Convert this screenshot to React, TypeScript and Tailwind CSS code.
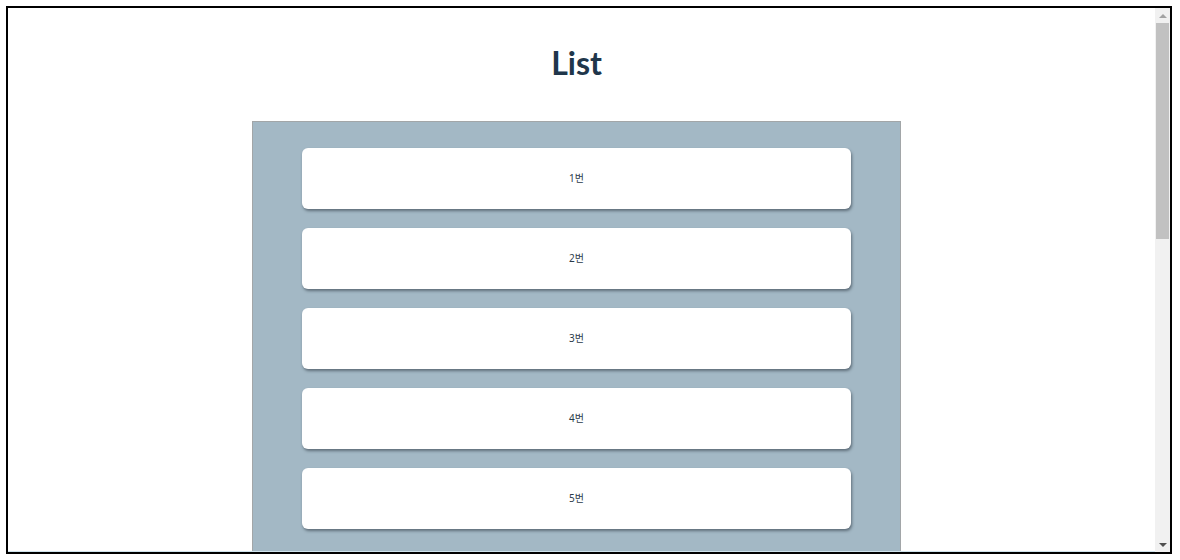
const items = ["1번", "2번", "3번", "4번", "5번"];

function App() {
  return (
    <div className="h-[560px] w-[1180px] overflow-hidden bg-white pl-[6px] pt-[6px]">
      <div className="flex h-[548px] w-[1166px] overflow-hidden border-2 border-black">
        <main className="flex-1 overflow-hidden border-b border-[#cfe3ec]">
          <h1 className="ml-[244px] mt-[35px] w-[649px] text-center font-['Lato',sans-serif] text-[32px] font-bold leading-[40px] text-[#20364b]">
            List
          </h1>
          <section className="ml-[244px] mt-[38px] flex w-[649px] flex-col gap-[19px] border border-[#a2a6a8] bg-[#a3b8c5] px-[49px] pb-[30px] pt-[26px]">
            {items.map((item) => (
              <div
                key={item}
                className="flex h-[61px] shrink-0 items-center justify-center rounded-[6px] bg-white font-['Noto_Sans','Noto_Sans_CJK_KR',sans-serif] text-[10px] text-[#2a3a4a] shadow-[1px_2px_3px_rgba(40,50,60,0.55)]"
              >
                {item}
              </div>
            ))}
          </section>
        </main>
        <div className="flex w-[15px] flex-col bg-[#f1f1f1]">
          <div className="flex h-[15px] items-center justify-center">
            <div className="h-0 w-0 border-x-[4px] border-b-[4px] border-x-transparent border-b-[#a3a3a3]" />
          </div>
          <div className="ml-[1px] h-[216px] w-[13px] bg-[#c1c1c1]" />
          <div className="flex-1" />
          <div className="flex h-[15px] items-center justify-center">
            <div className="h-0 w-0 border-x-[4px] border-t-[4px] border-x-transparent border-t-[#505050]" />
          </div>
        </div>
      </div>
    </div>
  );
}

export default App;
